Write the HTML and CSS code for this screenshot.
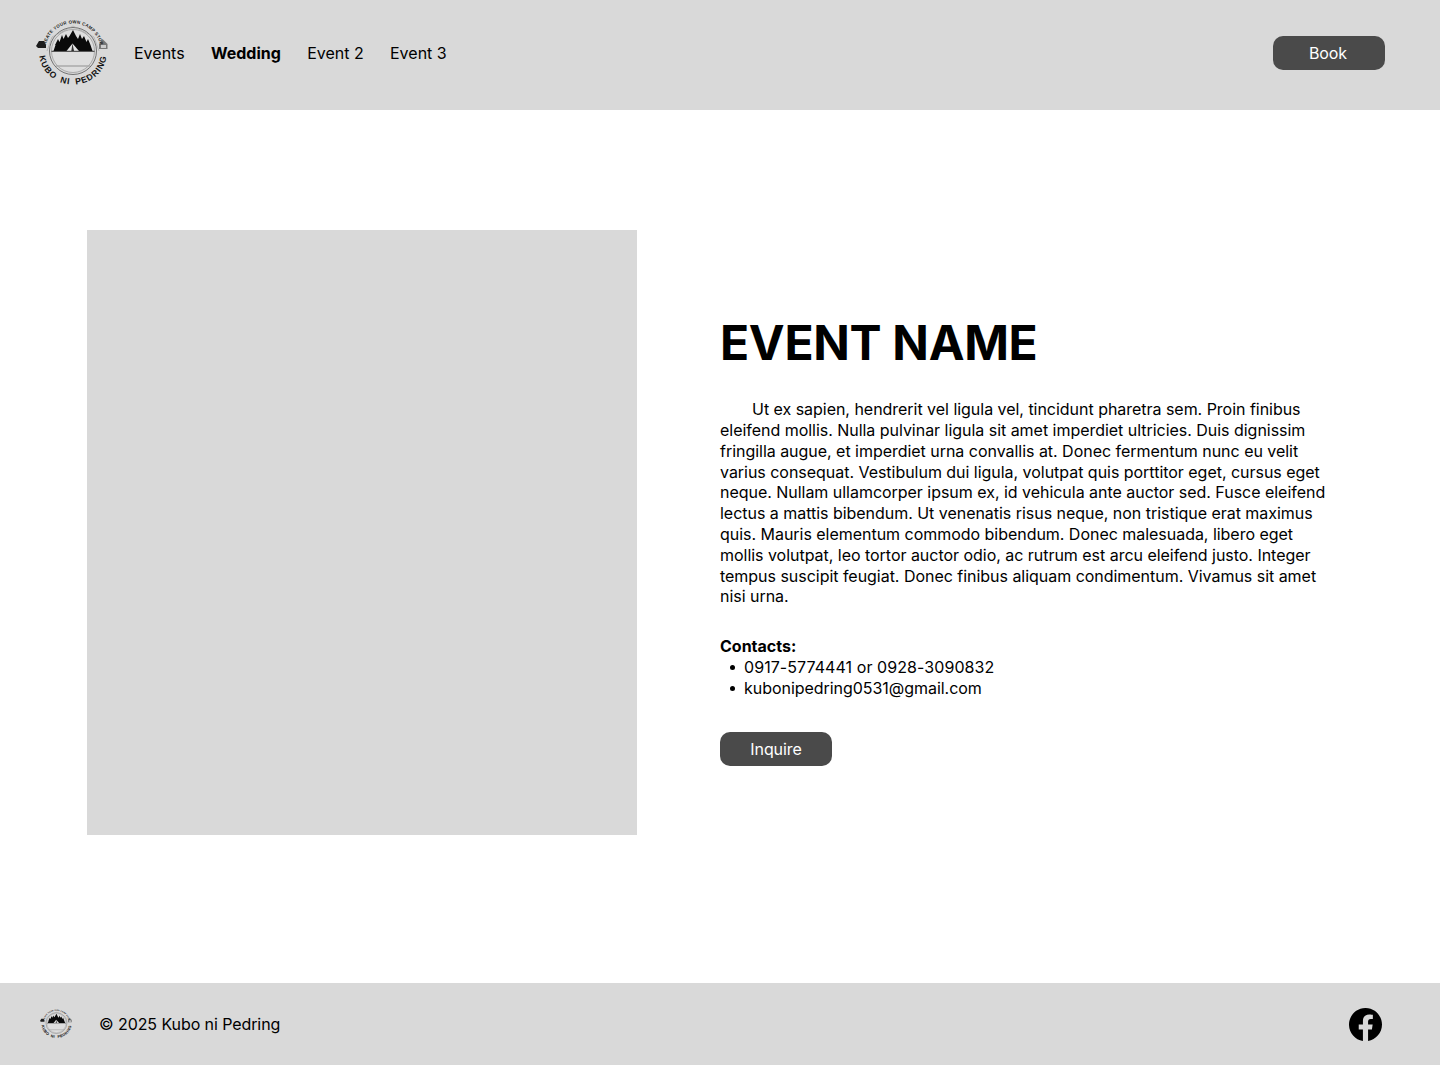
FILE: index.html
```html
<!DOCTYPE html>
<html lang="en">
<head>
<meta charset="utf-8">
<title>Kubo ni Pedring</title>
<link rel="stylesheet" href="styles.css">
</head>
<body>
<svg class="defs" width="0" height="0" aria-hidden="true">
  <defs>
    <symbol id="logo" viewBox="0 0 72 72">
      <path id="arcTop" d="M10 27 A28 28 0 0 1 64 27" fill="none"/>
      <path id="arcBottom" d="M3.500 37 A33.500 30.500 0 0 0 70.500 37" fill="none"/>
      <circle cx="37" cy="34" r="23.500" fill="none" stroke="#666" stroke-width="0.9"/>
      <circle cx="37" cy="34" r="21.500" fill="#dedede" stroke="#8a8a8a" stroke-width="0.6"/>
      <path d="M16 20 L37 9 L58 20 L63 34 M11 34 L16 20" fill="none" stroke="#999" stroke-width="0.5"/>
      <path d="M17.500 34 L19.500 28 L19 28 L22 22 L23.500 25 L26 18 L27.500 22 L30 17 L32 21 L33.500 19 L37 13 L40 19 L42 22 L44 17 L46 22 L48 19 L50.500 25 L52 22 L54.500 28 L56.500 34 Z" fill="#0a0a0a"/>
      <path d="M30.500 34 L36.500 26.500 L43 34 Z" fill="#e6e6e6"/>
      <path d="M36.500 26.500 L35.300 34 H38 Z" fill="#333"/>
      <path d="M15.500 34.300 H58.500" stroke="#222" stroke-width="0.9"/>
      <path d="M20 49 H54" stroke="#aaa" stroke-width="1.500"/>
      <path d="M0 29 L3 24 H8 L10 28 V31 H2 Z" fill="#1c1c1c"/>
      <path d="M66.500 22 L71.500 27 V32 H63 V27 Z" fill="#777"/>
      <path d="M65 28 H70 V31 H65 Z" fill="#ccc"/>
      <text class="logo-top"><textPath href="#arcTop" startOffset="50%" text-anchor="middle">CREATE YOUR OWN CAMP STORY</textPath></text>
      <text class="logo-bottom"><textPath href="#arcBottom" startOffset="50%" text-anchor="middle">KUBO NI PEDRING</textPath></text>
    </symbol>
  </defs>
</svg>

<header class="site-header">
  <div class="header-left">
    <svg class="logo-large" width="72" height="72"><use href="#logo"/></svg>
    <nav class="nav">
      <a href="#">Events</a>
      <a href="#" class="active">Wedding</a>
      <a href="#">Event 2</a>
      <a href="#">Event 3</a>
    </nav>
  </div>
  <a href="#" class="btn btn-book">Book</a>
</header>

<main class="main">
  <div class="photo"></div>
  <section class="details">
    <h1>EVENT NAME</h1>
    <p class="body-text">Ut ex sapien, hendrerit vel ligula vel, tincidunt pharetra sem. Proin finibus eleifend mollis. Nulla pulvinar ligula sit amet imperdiet ultricies. Duis dignissim fringilla augue, et imperdiet urna convallis at. Donec fermentum nunc eu velit varius consequat. Vestibulum dui ligula, volutpat quis porttitor eget, cursus eget neque. Nullam ullamcorper ipsum ex, id vehicula ante auctor sed. Fusce eleifend lectus a mattis bibendum. Ut venenatis risus neque, non tristique erat maximus quis. Mauris elementum commodo bibendum. Donec malesuada, libero eget mollis volutpat, leo tortor auctor odio, ac rutrum est arcu eleifend justo. Integer tempus suscipit feugiat. Donec finibus aliquam condimentum. Vivamus sit amet nisi urna.</p>
    <div class="contacts">
      <strong>Contacts:</strong>
      <ul>
        <li class="phone">0917-5774441 or 0928-3090832</li>
        <li class="email">kubonipedring0531@gmail.com</li>
      </ul>
    </div>
    <a href="#" class="btn btn-inquire">Inquire</a>
  </section>
</main>

<footer class="site-footer">
  <div class="footer-left">
    <svg class="logo-small" width="32" height="32"><use href="#logo"/></svg>
    <span class="copyright">© 2025 Kubo ni Pedring</span>
  </div>
  <a href="#" class="fb" aria-label="Facebook">
    <svg width="33" height="33" viewBox="0 0 16 16"><path fill="#000" d="M16 8.049c0-4.446-3.582-8.05-8-8.05C3.580 0-.002 3.603-.002 8.050c0 4.017 2.926 7.347 6.750 7.951v-5.625h-2.030V8.050H6.750V6.275c0-2.017 1.195-3.131 3.022-3.131.876 0 1.791.157 1.791.157v1.980h-1.009c-.993 0-1.303.621-1.303 1.258v1.510h2.218l-.354 2.326H9.250V16c3.824-.604 6.750-3.934 6.750-7.951"/></svg>
  </a>
</footer>
</body>
</html>
```
FILE: styles.css
```css
* { box-sizing: border-box; }
html, body { margin: 0; padding: 0; }
body {
  font-family: Inter, "Liberation Sans", sans-serif;
  font-size: 16px;
  line-height: 1.3;
  color: #000;
  background: #fff;
  min-height: 1065px;
  display: flex;
  flex-direction: column;
}
.defs { display: block; height: 0; }
a { color: inherit; text-decoration: none; }

.site-header {
  height: 110px;
  background: #d9d9d9;
  display: flex;
  align-items: center;
  justify-content: space-between;
  padding: 0 55px 4px 36px;
}
.header-left { display: flex; align-items: center; gap: 26px; }
.logo-large { display: block; }
.logo-top { font: 700 4.4px "Liberation Sans", sans-serif; fill: #222; letter-spacing: 0.3px; }
.logo-bottom { font: 700 8.6px "Liberation Sans", sans-serif; fill: #111; letter-spacing: 0.9px; word-spacing: 2.5px; }
.nav { display: flex; gap: 26.3px; }
.nav .active { font-weight: 700; }

.btn {
  display: flex;
  align-items: center;
  justify-content: center;
  width: 112px;
  height: 34px;
  border-radius: 10px;
  background: #4a4a4a;
  color: #fff;
  letter-spacing: -0.1px;
}
.btn-book { padding-right: 2px; }
.btn-inquire { padding-top: 1px; }

.main {
  height: 873px;
  display: flex;
  align-items: flex-start;
  gap: 83px;
  padding: 120px 110px 0 87px;
}
.photo { width: 550px; height: 605px; background: #d9d9d9; flex: none; }
.details { flex: 1; padding-top: 84px; }
.details h1 {
  margin: 0 0 27.2px;
  font-size: 48px;
  line-height: 58px;
  font-weight: 700;
  letter-spacing: -0.3px;
}
.body-text { margin: 0 0 29px; text-indent: 32px; letter-spacing: -0.03px; }
.contacts ul { margin: 0 0 33.2px; padding: 0 0 0 10px; list-style: none; }
.contacts li { display: flex; align-items: center; }
.contacts li::before {
  content: "";
  width: 5px;
  height: 5px;
  margin: 1px 9px 0 0;
  border-radius: 50%;
  background: #000;
}
.phone { letter-spacing: 0.07px; }
.email { letter-spacing: -0.04px; }

.site-footer {
  height: 82px;
  background: #d9d9d9;
  display: flex;
  align-items: center;
  justify-content: space-between;
  padding: 0 58px 0 40px;
}
.footer-left { display: flex; align-items: center; gap: 27px; }
.logo-small { display: block; }
.copyright { letter-spacing: -0.08px; }
.fb { display: block; height: 33px; margin-top: 1px; }
.fb svg { display: block; }
```
